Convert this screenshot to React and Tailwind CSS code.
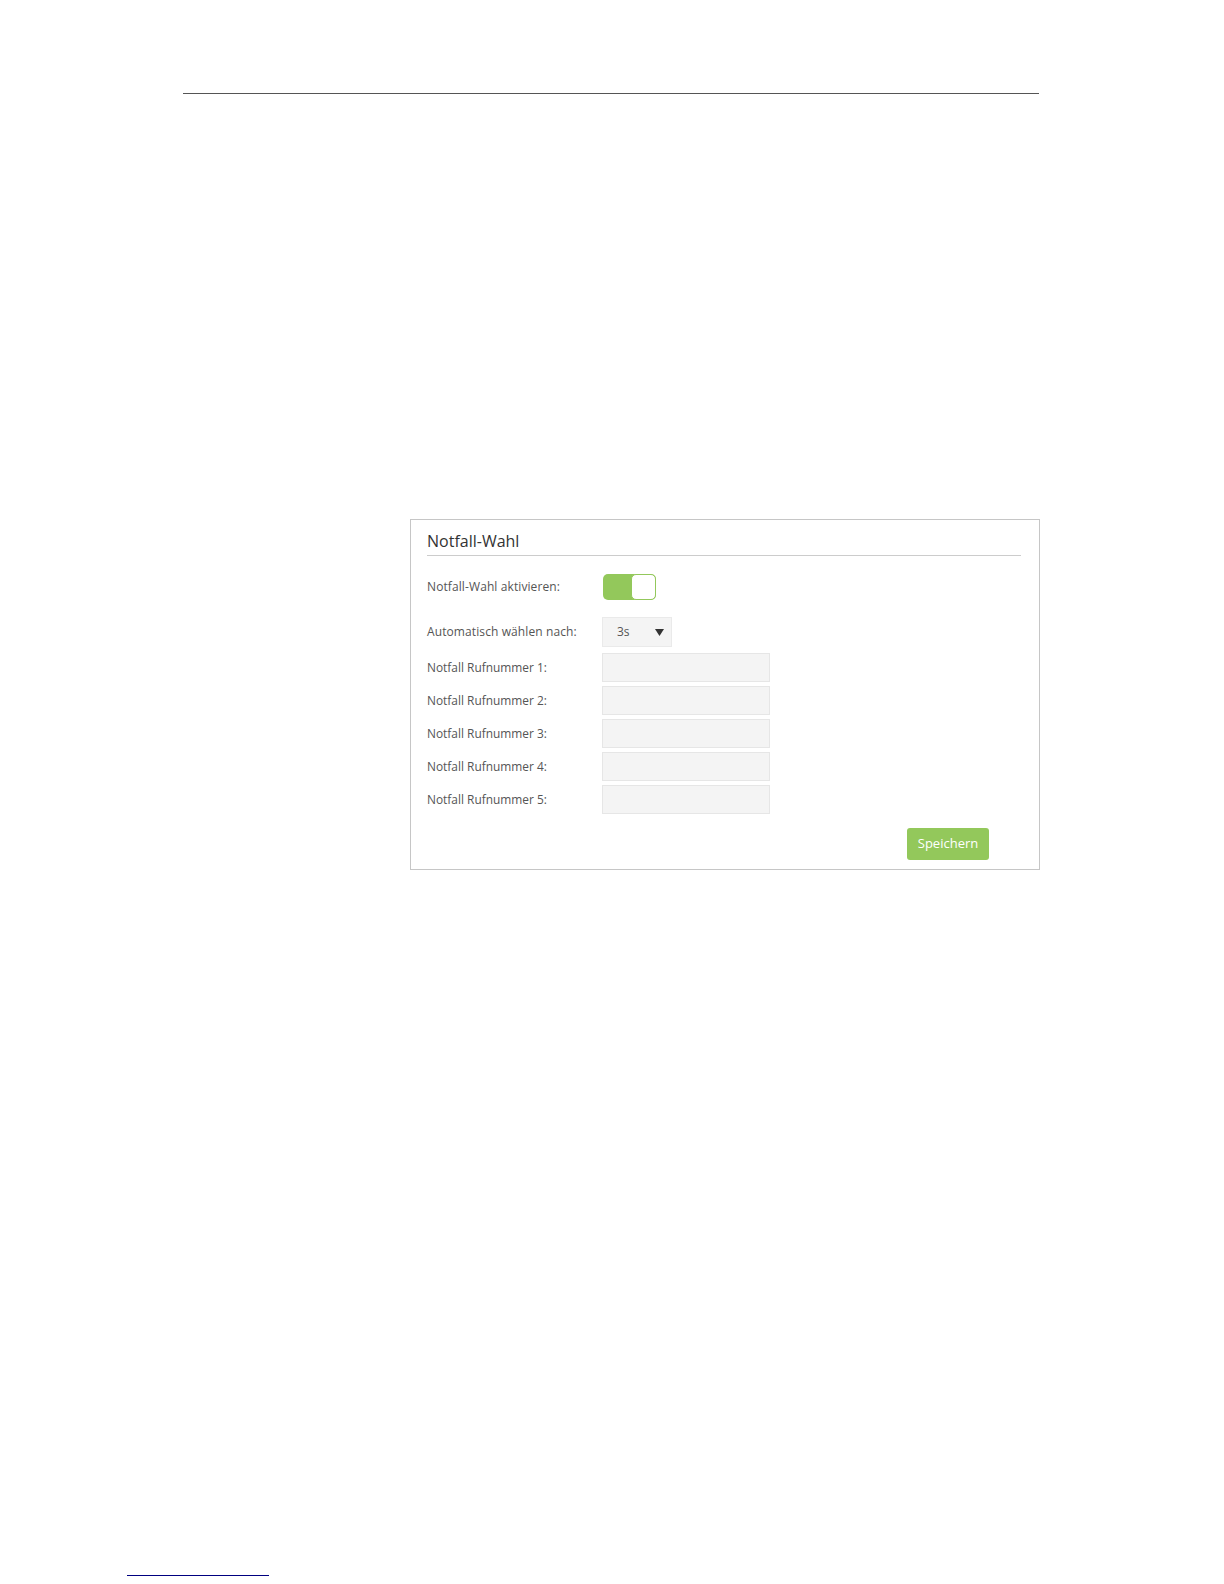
import React, { useState } from "react";

const rows = [1, 2, 3, 4, 5];

function Toggle({ on, onChange }) {
  return (
    <button
      type="button"
      onClick={() => onChange(!on)}
      className={`ml-px flex h-[26px] w-[53px] items-stretch rounded-[5px] p-0 ${
        on ? "justify-end bg-[#93c85b]" : "justify-start bg-[#d9d9d9]"
      }`}
    >
      <span
        className={`block w-[25px] rounded-[5px] border bg-white ${
          on ? "border-[#93c85b]" : "border-[#d9d9d9]"
        }`}
      />
    </button>
  );
}

export default function App() {
  const [enabled, setEnabled] = useState(true);
  const [delay, setDelay] = useState("3s");
  const [numbers, setNumbers] = useState(["", "", "", "", ""]);

  return (
    <div
      className="relative h-[1584px] w-[1224px] bg-white text-[#555]"
      style={{ fontFamily: '"Open Sans", "Liberation Sans", sans-serif' }}
    >
      <div className="pt-[93px]">
        <div className="ml-[183px] h-px w-[856px] bg-[#555]" />
      </div>

      <div className="ml-[410px] mt-[425px] h-[351px] w-[630px] border border-[#c6c6c6] pl-[16px] pr-[18px] pt-[11px]">
        <div className="border-b border-[#cccccc] pb-[3px]">
          <h2 className="text-[16px] leading-[21px] text-[#333]">Notfall-Wahl</h2>
        </div>

        <div className="mt-[18px] flex items-center">
          <label className="w-[175px] text-[12px] tracking-[0.1px]">Notfall-Wahl aktivieren:</label>
          <Toggle on={enabled} onChange={setEnabled} />
        </div>

        <div className="mt-[17px] flex items-center">
          <label className="w-[175px] text-[12px] tracking-[0.1px]">Automatisch wählen nach:</label>
          <div className="relative h-[30px] w-[70px] border border-[#eaeaea] bg-[#f4f4f4]">
            <select
              value={delay}
              onChange={(e) => setDelay(e.target.value)}
              className="h-full w-full appearance-none bg-transparent pl-[14px] text-[12px] text-[#555] outline-none"
            >
              <option>3s</option>
              <option>5s</option>
              <option>10s</option>
            </select>
            <svg
              className="pointer-events-none absolute right-[7px] top-[11px]"
              width="9"
              height="7"
              viewBox="0 0 9 7"
            >
              <path d="M0 0 H9 L4.5 7 Z" fill="#333" />
            </svg>
          </div>
        </div>

        <div className="mt-[6px] flex flex-col gap-[4px]">
          {rows.map((n, i) => (
            <div key={n} className="flex items-center">
              <label className="w-[175px] text-[11.9px]">Notfall Rufnummer {n}:</label>
              <input
                type="text"
                value={numbers[i]}
                onChange={(e) => {
                  const next = [...numbers];
                  next[i] = e.target.value;
                  setNumbers(next);
                }}
                className="h-[29px] w-[168px] border border-[#e6e6e6] bg-[#f4f4f4] px-2 text-[12px] outline-none"
              />
            </div>
          ))}
        </div>

        <div className="mt-[14px] flex justify-end pr-[32px]">
          <button
            type="button"
            className="h-[32px] w-[82px] rounded-[3px] bg-[#93c85b] text-[13px] text-white"
          >
            Speichern
          </button>
        </div>
      </div>

      <div className="ml-[127px] mt-[705px] h-px w-[142px] bg-[#000080]" />
    </div>
  );
}
